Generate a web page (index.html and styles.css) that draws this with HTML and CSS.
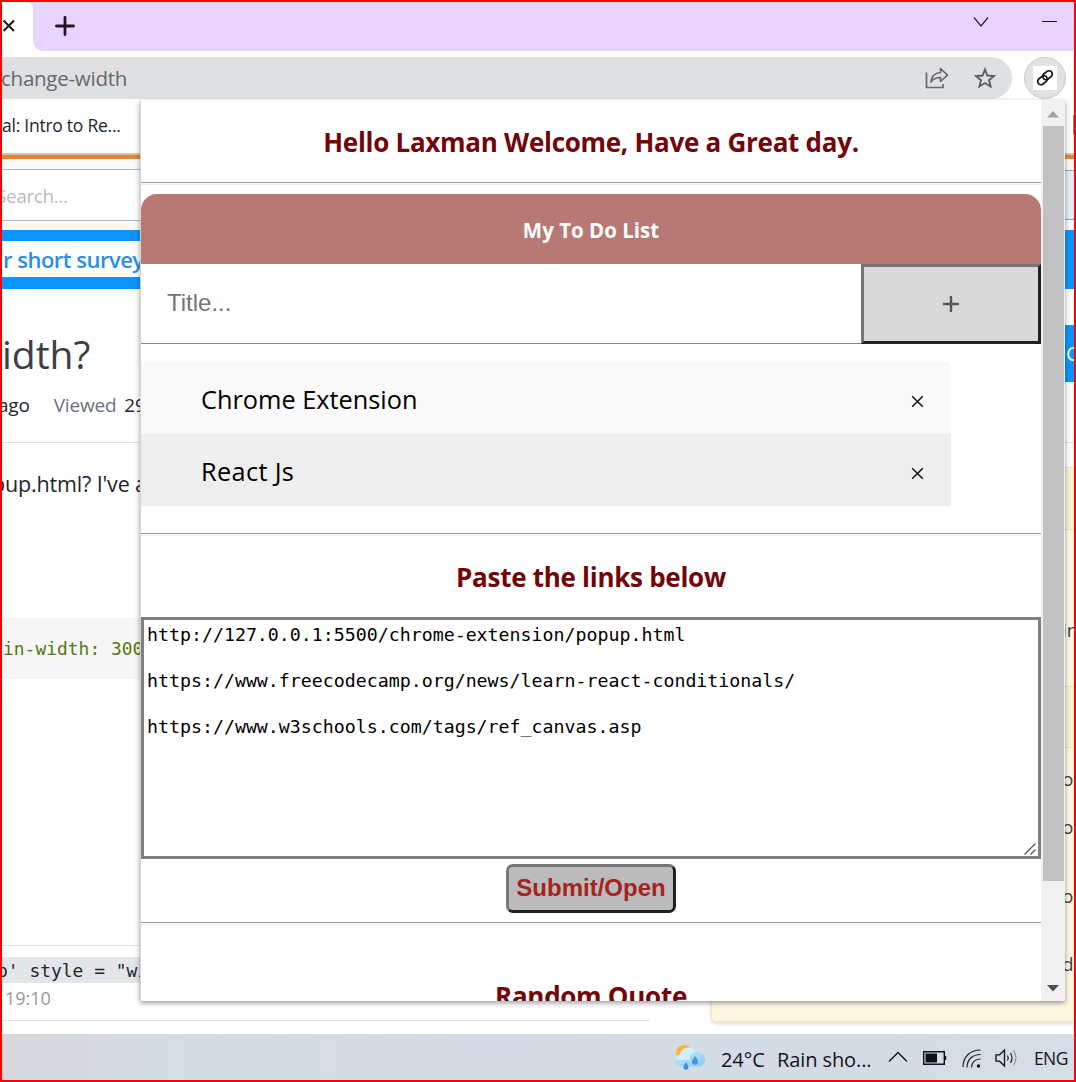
FILE: index.html
```html
<!DOCTYPE html>
<html lang="en">
<head>
<meta charset="utf-8">
<title>My To Do List</title>
<link rel="stylesheet" href="styles.css">
</head>
<body>
<div class="screen">
  <div class="tabstrip">
    <div class="tab"><svg width="12" height="14" viewBox="0 0 12 14"><path d="M0.5 1.5L11 12M11 1.500L0.500 12" stroke="#222" stroke-width="2.200"/></svg></div>
    <div class="strip">
      <svg class="new-tab" width="20" height="20" viewBox="0 0 20 20"><path d="M10 1.500V18.500M1.500 10H18.500" stroke="#1f1a26" stroke-width="2.800" stroke-linecap="round"/></svg>
      <svg class="chevron" width="16" height="10" viewBox="0 0 16 10"><path d="M1 .5L8 9L15 .5" fill="none" stroke="#2a2035" stroke-width="1.200"/></svg>
      <span class="minimize"></span>
    </div>
  </div>
  <div class="toolbar">
    <div class="omnibox">
      <span class="url">change-width</span>
      <svg class="share" width="24" height="22" viewBox="0 0 24 22"><path d="M1.500 5.500V20.500H18V17" fill="none" stroke="#66686b" stroke-width="1.700"/><path d="M6 15C6.500 9 10 6 15.500 5.500V1.500L22.500 8.200L15.500 14.500V10.500C11 10.500 8.500 11.500 6 15Z" fill="none" stroke="#66686b" stroke-width="1.600" stroke-linejoin="round"/></svg>
      <svg class="star" width="22" height="22" viewBox="0 0 22 22"><path d="M11 2.500L13.400 8.500L20 9L15 13.200L16.600 19.500L11 16L5.400 19.500L7 13.200L2 9L8.600 8.500Z" fill="none" stroke="#5c5e61" stroke-width="1.900"/></svg>
    </div>
    <div class="ext"><span><svg width="18" height="18" viewBox="0 0 18 18"><g fill="none" stroke="#111" stroke-width="1.700"><rect x="-5.200" y="-3.300" width="10.400" height="6.600" rx="3.300" transform="translate(6.500 11.200) rotate(-38)"/><rect x="-5.200" y="-3.300" width="10.400" height="6.600" rx="3.300" transform="translate(11.500 6.200) rotate(-38)"/></g></svg></span></div>
  </div>
  <div class="bookmarks"><span>al: Intro to Re...</span><i class="bookmark-mark"></i></div>
  <div class="accent"></div>
  <div class="site-header"><div class="search">Search...</div><div class="header-button"></div></div>
  <div class="survey"><div>r short survey</div></div>
  <div class="question-head">
    <div class="title"><h1>idth?</h1><div class="ask">C</div></div>
    <div class="meta"><span>ago</span><span class="label">Viewed</span><span>29</span></div>
  </div>
  <div class="page">
    <div class="post">
      <p class="post-text">pup.html? I've a</p>
      <div class="code">in-width: 300</div>
      <div class="comment"><code>p' style = "wi</code><span>19:10</span></div>
    </div>
    <div class="sidebar">
      <div class="side-head"></div>
      <div class="side-item one">in</div>
      <div class="side-head second"></div>
      <div class="side-item two">on</div>
      <div class="side-item three">ot</div>
      <div class="side-item four">o</div>
      <div class="side-item five">d</div>
    </div>
  </div>
  <div class="taskbar">
    <svg class="weather" width="32" height="28" viewBox="0 0 32 28">
      <defs><linearGradient id="cloud" x1="0" y1="0" x2="1" y2="1"><stop offset="0" stop-color="#c9edfa"/><stop offset="1" stop-color="#8fc8ee"/></linearGradient></defs>
      <circle cx="10.500" cy="9.500" r="8.500" fill="#f6b73c"/>
      <path d="M7 22.500a6 6 0 0 1-.5-12A9 9 0 0 1 23 8.500a7 7 0 0 1 2 14z" fill="url(#cloud)"/>
      <path d="M6 10.500a8.500 8.500 0 0 1 16-2.500a8 8 0 0 0-7 8H2a6 6 0 0 1 4-5.500z" fill="#d9f3fc" opacity=".75"/>
      <path d="M21 12c2 3 3 4.300 3 5.800a3 3 0 0 1-6 0c0-1.500 1-2.800 3-5.800zM12 18c1.700 2.600 2.500 4 2.500 5.300a2.500 2.500 0 0 1-5 0c0-1.300.8-2.700 2.500-5.300z" fill="#3d97dc"/>
    </svg>
    <span class="temp">24°C</span><span class="forecast">Rain sho...</span>
    <svg class="tray-up" width="20" height="12" viewBox="0 0 20 12"><path d="M1 10.500L10 1.500L19 10.500" fill="none" stroke="#111" stroke-width="1.300"/></svg>
    <svg class="battery" width="24" height="14" viewBox="0 0 24 14"><path d="M.7.700H21.300V13.300H.7zM22.500 5V9" fill="none" stroke="#111" stroke-width="1.400"/><path d="M2.500 2.500H14V11.500H2.500z" fill="#111"/></svg>
    <svg class="wifi" width="20" height="20" viewBox="0 0 20 20"><g fill="none" stroke="#222" stroke-width="1.200"><path d="M1 18C1 8 8 1 18.500 1"/><path d="M5 18.500C5 10.500 10.500 5.500 18.500 5.500"/><path d="M9.500 18.500C9.500 13.500 13 10 18.500 10"/></g><circle cx="16.500" cy="17" r="1.700" fill="#111"/></svg>
    <svg class="sound" width="24" height="20" viewBox="0 0 24 20"><path d="M1 6.800H4.500L9.500 2V18L4.500 13.200H1Z" fill="none" stroke="#111" stroke-width="1.300"/><path d="M12.500 7.500Q14 10 12.500 12.500M15.500 5Q18.500 10 15.500 15" fill="none" stroke="#222" stroke-width="1.200"/><path d="M18.500 2.500Q23.500 10 18.500 17.500" fill="none" stroke="#8e959b" stroke-width="1.200"/></svg>
    <span class="lang">ENG</span>
  </div>
</div>

<div class="popup">
  <div class="popup-body">
    <h2 class="greeting"><span>Hello Laxman Welcome, Have a Great day.</span></h2>
    <div class="rule"></div>
    <div class="todo-head"><span>My To Do List</span></div>
    <div class="todo-form"><div class="todo-input">Title...</div><div class="todo-add"><svg width="16" height="16" viewBox="0 0 16 16"><path d="M8 0V16M0 8H16" stroke="#555" stroke-width="2.400"/></svg></div></div>
    <ul class="todo-list">
      <li><span class="item-a">Chrome Extension</span><svg width="13" height="13" viewBox="0 0 13 13"><path d="M1.200 1.200L11.800 11.800M11.800 1.200L1.200 11.800" stroke="#111" stroke-width="1.500"/></svg></li>
      <li><span class="item-b">React Js</span><svg width="13" height="13" viewBox="0 0 13 13"><path d="M1.200 1.200L11.800 11.800M11.800 1.200L1.200 11.800" stroke="#111" stroke-width="1.500"/></svg></li>
    </ul>
    <div class="rule"></div>
    <h2 class="paste"><span>Paste the links below</span></h2>
    <div class="links"><pre>http://127.0.0.1:5500/chrome-extension/popup.html

https://www.freecodecamp.org/news/learn-react-conditionals/

https://www.w3schools.com/tags/ref_canvas.asp</pre><svg width="14" height="14" viewBox="0 0 14 14"><path d="M1.500 12.500L12.500 1.500M7.500 12.500L12.500 7.500" stroke="#555" stroke-width="1.300"/></svg></div>
    <div class="submit">Submit/Open</div>
    <div class="rule"></div>
    <h2 class="quote"><span>Random Quote</span></h2>
  </div>
  <div class="scrollbar">
    <svg width="12" height="7" viewBox="0 0 12 7"><path d="M0 6.500L6 0L12 6.500z" fill="#a3a3a3"/></svg>
    <div class="thumb"></div>
    <svg class="down" width="12" height="7" viewBox="0 0 12 7"><path d="M0 0L6 6.500L12 0z" fill="#505050"/></svg>
  </div>
</div>
<div class="frame"></div>
</body>
</html>
```
FILE: styles.css
```css
* { box-sizing: border-box; }
html, body { margin: 0; width: 1076px; height: 1082px; overflow: hidden; }
body { position: relative; background: #fff; font-family: "Open Sans", "Noto Sans", sans-serif; color: #232629; white-space: nowrap; }
svg { display: block; flex: none; }
h1, h2, p, ul, pre { margin: 0; padding: 0; font-weight: 400; }
.screen { display: flex; flex-direction: column; width: 1076px; height: 1082px; overflow: hidden; }

.tabstrip { height: 51px; display: flex; background: linear-gradient(#e8d4ff 25px, #fff 25px); flex: none; }
.tab { width: 33px; padding: 19px 0 0 3px; background: #fff; border-top-right-radius: 9px; }
.strip { flex: 1; display: flex; background: #e8d4ff; border-bottom-left-radius: 10px; }
.new-tab { margin: 16px 0 0 22px; }
.chevron { margin: 17px 0 0 auto; }
.minimize { width: 15px; height: 1px; background: #111; margin: 21px 19px 0 53px; }

.toolbar { height: 48px; display: flex; padding-top: 6px; flex: none; }
.omnibox { width: 1012px; height: 42px; background: #dfe0e2; border-radius: 0 21px 21px 0; display: flex; align-items: center; }
.url { font-size: 20.5px; letter-spacing: -.25px; color: #66686b; padding-left: 1px; }
.share { margin-left: auto; margin-right: 25px; }
.star { margin-right: 16px; }
.ext { width: 42px; height: 42px; margin-left: 12px; border-radius: 50%; background: #e2e2e3; border: 1px solid #ccc; display: flex; align-items: center; justify-content: center; }
.ext span { width: 24px; height: 24px; background: #fff; padding: 3px; }

.bookmarks { height: 55px; display: flex; align-items: center; justify-content: space-between; font-size: 17.5px; letter-spacing: -.25px; padding: 0 0 3px 2px; flex: none; }
.bookmark-mark { width: 3px; height: 20px; background: #9b7b7b; }
.accent { height: 6px; margin-top: -1px; background: #e58434; border-top: 2px solid #dcc0a8; flex: none; }
.site-header { height: 71px; background: #f8f9f9; padding: 10px 0 9px; display: flex; justify-content: space-between; flex: none; }
.search { width: 700px; border: solid #b4b8bc; border-width: 1px 0; background: #fff; color: #b7bbbf; font-size: 19px; letter-spacing: -.4px; line-height: 52px; text-indent: -4px; }
.header-button { width: 200px; background: #e1ecf4; border: 1px solid #83a6c4; border-right: 0; height: 50px; margin-top: 1px; }
.survey { height: 59px; background: #0a95ff; padding: 11px 0 12px; flex: none; }
.survey div { width: 500px; height: 36px; background: #fff; color: #2a8de8; font-size: 22px; letter-spacing: -.5px; line-height: 37px; font-weight: 600; padding-left: 3px; }

.question-head { height: 154px; border-bottom: 1px solid #dfe1e3; padding-top: 36px; flex: none; }
.title { height: 58px; display: flex; justify-content: space-between; }
.title h1 { font-size: 39px; line-height: 57px; padding-left: 2px; color: #3b4045; }
.ask { width: 130px; height: 57px; background: #0a95ff; color: #fff; font-size: 20px; line-height: 57px; padding-left: 120px; }
.meta { display: flex; font-size: 19px; letter-spacing: -.2px; line-height: 29px; padding-top: 8px; color: #232629; }
.meta span:first-child { text-indent: -2px; }
.meta .label { color: #6a737c; margin: 0 8px 0 24px; }

.page { display: flex; height: 591px; flex: none; }
.post { width: 650px; padding-top: 24px; display: flex; flex-direction: column; }
.post-text { font-size: 21.5px; letter-spacing: -.15px; line-height: 34px; text-indent: -8px; }
.code { height: 61px; margin-top: 117px; background: #f6f6f6; color: #54790d; font: 17.94px/62px "DejaVu Sans Mono", monospace; padding-left: 3px; }
.comment { margin-top: 266px; height: 76px; border: solid #dde5ea; border-width: 1px 0; display: flex; flex-direction: column; align-items: flex-start; padding-top: 11px; }
.comment code { width: 300px; background: #e3e6e8; font: 17.94px/27px "DejaVu Sans Mono", monospace; height: 26px; text-indent: -3px; }
.comment span { font-size: 18px; line-height: 30px; color: #9199a1; padding-left: 5px; }
.sidebar { width: 365px; height: 555px; margin: 24px 0 0 61px; background: #fdf7e2; border: 1px solid #f1e5bc; border-right: 0; border-radius: 5px; box-shadow: 0 2px 4px #0002; color: #3b4045; font-size: 19px; line-height: 28px; overflow: hidden; }
.side-head { height: 62px; background: #fbf3d5; border-bottom: 1px solid #f1e5bc; }
.side-head.second { margin-top: 42px; border-top: 1px solid #f1e5bc; }
.side-item { padding-left: 350px; }
.one { padding-top: 86px; }
.two { padding-top: 17px; }
.three { padding-top: 20px; }
.four { padding-top: 41px; }
.five { padding-top: 40px; }

.taskbar { height: 48px; background: linear-gradient(90deg, #d7d7dc, #d3dde4 16%, #d5dbe6 45%, #d3dce5 75%, #d5dde6); display: flex; padding-left: 674px; color: #151515; flex: none; }
.weather { margin-top: 10px; }
.temp, .forecast, .lang { font-size: 20px; line-height: 51px; letter-spacing: -.1px; }
.temp { width: 56px; margin-left: 15px; }
.forecast { width: 111px; }
.tray-up { margin-top: 17px; }
.battery { margin: 17px 0 0 15px; }
.wifi { margin: 15px 0 0 15px; }
.sound { margin: 14px 0 0 13px; }
.lang { margin-left: 15px; font-size: 17.500px; letter-spacing: -.6px; line-height: 48px; }

.popup { position: absolute; left: 140px; top: 100px; width: 925px; height: 901px; display: flex; background: #fff; border-left: 1px solid #d5d5d5; box-shadow: 0 2px 5px #0006; overflow: hidden; }
.popup-body { width: 900px; height: 901px; overflow: hidden; display: flex; flex-direction: column; }
.popup h2 { font-size: 26px; line-height: 36px; letter-spacing: -.28px; color: #720509; font-weight: 700; text-align: center; flex: none; }
.popup-body .greeting { padding-top: 24px; height: 82px; }
.rule { height: 3px; border-top: 1px solid #999; border-bottom: 1px solid #eee; flex: none; }
.todo-head { height: 70px; margin-top: 9px; background: #b87974; border-radius: 16px 16px 0 0; color: #fff; font-weight: 700; font-size: 20.5px; line-height: 73px; text-align: center; flex: none; }
.todo-form { height: 80px; display: flex; font-family: "Liberation Sans", Arial, sans-serif; color: #757575; flex: none; }
.todo-input { width: 720px; border-bottom: 1px solid #9f7a7a; font-size: 24px; line-height: 77px; padding-left: 26px; }
.todo-add { width: 180px; border: 3px solid; border-color: #767676 #212121 #212121 #767676; background: #d9d9d9; display: flex; align-items: center; justify-content: center; }
.todo-list { width: 810px; margin: 18px 0 27px; list-style: none; color: #000; font-size: 25.3px; flex: none; }
.todo-list li { height: 72px; background: #f9f9f9; display: flex; align-items: center; justify-content: space-between; padding: 2px 27px 0 60px; }
.todo-list li + li { background: #eee; }
.todo-list svg { margin-top: 4px; }
.item-b { letter-spacing: .35px; }
.popup-body .paste { height: 81px; padding-top: 23px; }
.links { height: 242px; border: 3px solid #808080; padding: 3px 1px 0 3px; color: #000; display: flex; align-items: flex-end; justify-content: space-between; flex: none; }
.links pre { align-self: flex-start; font: 18.25px/23px "DejaVu Sans Mono", monospace; }
.submit { width: 170px; height: 49px; margin: 5px auto 9px; border: 3px solid; border-color: #767676 #212121 #212121 #767676; border-radius: 7px; background: #bbb; color: #a52420; font: bold 24px/42px "Liberation Sans", Arial, sans-serif; text-align: center; flex: none; }
.popup-body .quote { padding-top: 53px; }
.scrollbar { width: 24px; background: #f1f1f1; display: flex; flex-direction: column; align-items: center; padding-top: 11px; }
.thumb { width: 21px; height: 755px; margin: 8px 0 0 1px; background: #c1c1c1; }
.down { margin-top: 104px; }
.frame { position: absolute; inset: 0; border: 2px solid #f00; pointer-events: none; }
```
